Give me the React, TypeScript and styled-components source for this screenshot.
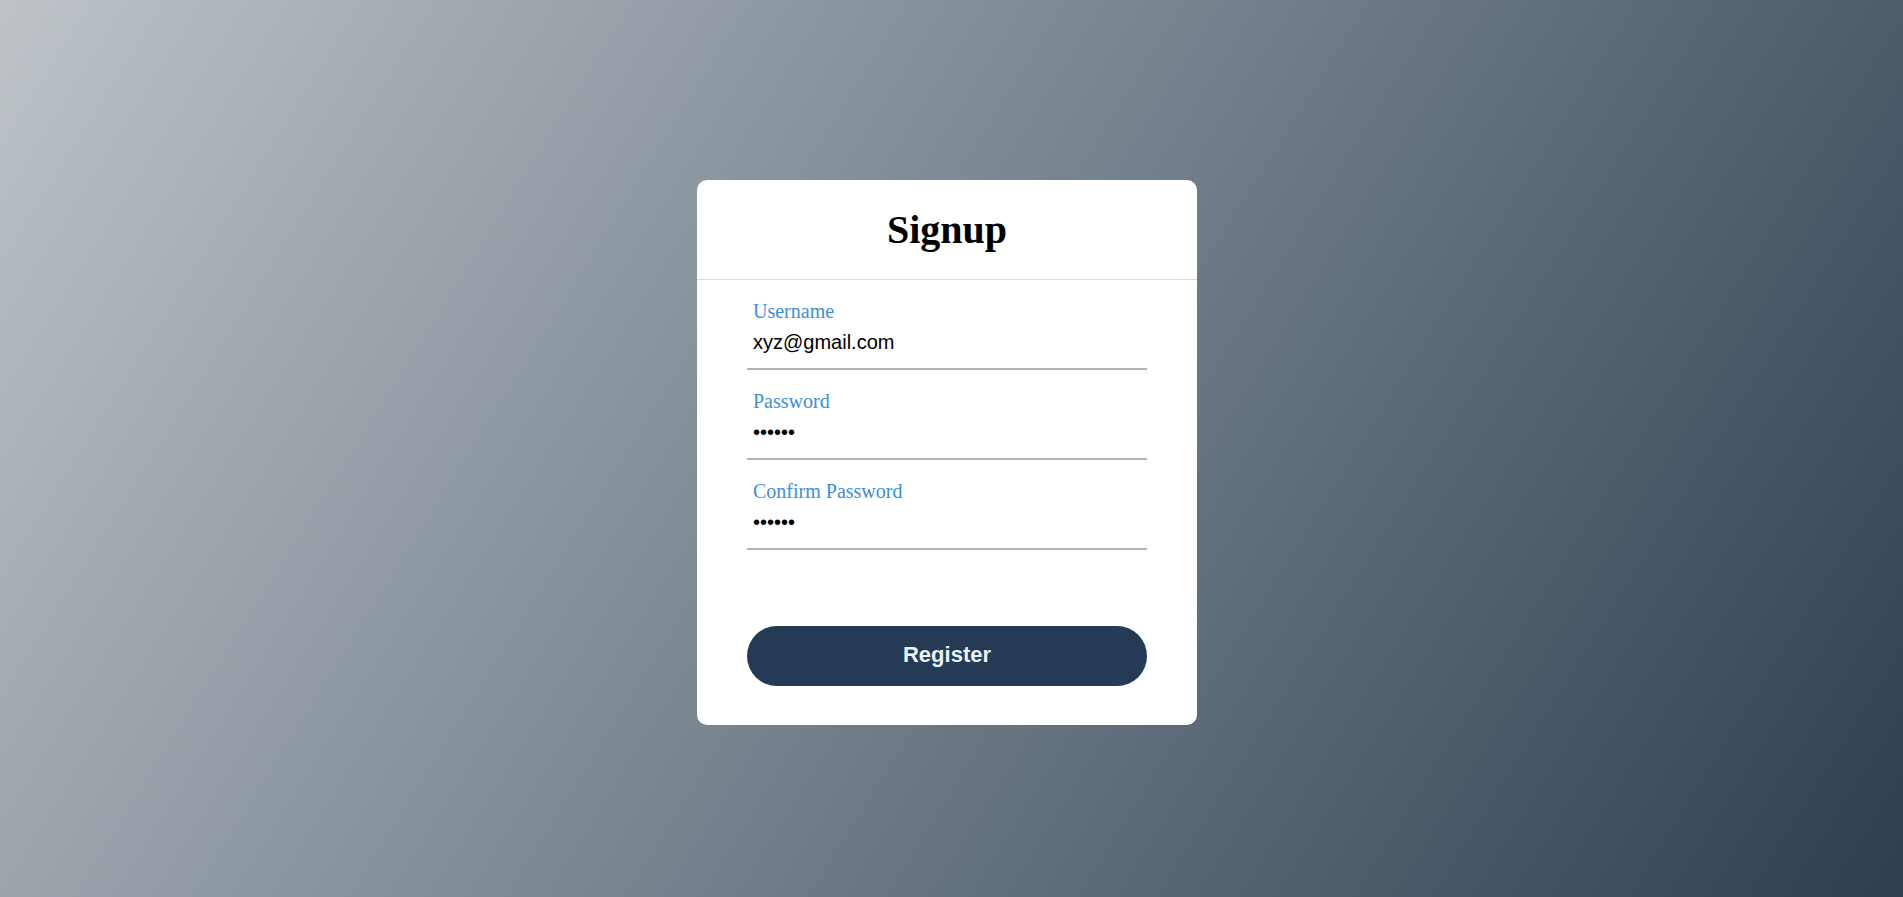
import React from "react";
import styled, { createGlobalStyle } from "styled-components";

const GlobalStyle = createGlobalStyle`
  html, body {
    margin: 0;
    padding: 0;
    height: 100%;
  }
  body {
    font-family: "Liberation Serif", "Times New Roman", serif;
    background: linear-gradient(122deg, #bdc3c7, #2c3e50);
    min-height: 100vh;
  }
  #root {
    min-height: 100vh;
  }
`;

const Page = styled.main`
  box-sizing: border-box;
  min-height: 100vh;
  display: flex;
  align-items: center;
  justify-content: center;
  padding: 8px 9px 0 0;
`;

const Card = styled.section`
  width: 500px;
  background: #ffffff;
  border-radius: 10px;
  display: flex;
  flex-direction: column;
`;

const Title = styled.h1`
  margin: 0;
  padding: 27px 0 26px;
  text-align: center;
  font-family: "Liberation Serif", "Times New Roman", serif;
  font-size: 40px;
  font-weight: 700;
  line-height: 46px;
  color: #000;
  border-bottom: 1px solid #d9d9d9;
`;

const Form = styled.form`
  display: flex;
  flex-direction: column;
  padding: 0 50px 39px;
`;

const Field = styled.div`
  display: flex;
  flex-direction: column;
  padding: 20px 0 6px;
  border-bottom: 2px solid #b4b4b4;
`;

const Label = styled.label`
  padding-left: 6px;
  font-family: "Liberation Serif", "Times New Roman", serif;
  font-size: 20px;
  line-height: 23px;
  color: #3a8fd9;
`;

const Input = styled.input`
  box-sizing: border-box;
  width: 100%;
  height: 39px;
  padding: 0 6px;
  margin: 0;
  border: none;
  background: none;
  outline: none;
  font-family: "Liberation Sans", Arial, sans-serif;
  font-size: 20px;
  color: #000;
`;

const Button = styled.button`
  box-sizing: border-box;
  margin-top: 76px;
  height: 60px;
  width: 100%;
  padding: 0 0 2px;
  border: none;
  border-radius: 30px;
  background: #243a55;
  color: #e9f4fb;
  font-family: "Liberation Sans", Arial, sans-serif;
  font-size: 22px;
  font-weight: 700;
  cursor: pointer;
`;

export default function App() {
  return (
    <>
      <GlobalStyle />
      <Page>
        <Card>
          <Title>Signup</Title>
          <Form onSubmit={(e) => e.preventDefault()}>
            <Field>
              <Label htmlFor="username">Username</Label>
              <Input id="username" type="text" defaultValue="xyz@gmail.com" />
            </Field>
            <Field>
              <Label htmlFor="password">Password</Label>
              <Input id="password" type="password" defaultValue="123456" />
            </Field>
            <Field>
              <Label htmlFor="confirm">Confirm Password</Label>
              <Input id="confirm" type="password" defaultValue="123456" />
            </Field>
            <Button type="submit">Register</Button>
          </Form>
        </Card>
      </Page>
    </>
  );
}
